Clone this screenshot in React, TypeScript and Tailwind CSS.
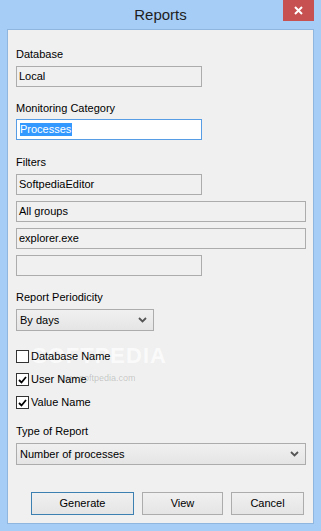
import React from "react";

const font = { fontFamily: '"Liberation Sans", Arial, sans-serif' };

const TextBox = ({ value, wide }: { value?: string; wide?: boolean }) => (
  <div
    className={`h-[21px] border border-[#acacac] bg-[#f0f0f0] flex items-center pl-[2px] text-[11px] text-black ${
      wide ? "w-[290px]" : "w-[186px]"
    }`}
  >
    {value}
  </div>
);

const Chevron = () => (
  <svg width="9" height="6" viewBox="0 0 9 6" className="shrink-0">
    <path d="M1 1 L4.5 4.5 L8 1" fill="none" stroke="#555" strokeWidth="1.8" />
  </svg>
);

const Select = ({ value, wide }: { value: string; wide?: boolean }) => (
  <div
    className={`h-[22px] border border-[#acacac] bg-gradient-to-b from-[#f0f0f0] to-[#e5e5e5] flex items-center justify-between pl-[3px] pr-[6px] text-[11px] text-black ${
      wide ? "w-[290px]" : "w-[138px]"
    }`}
  >
    <span>{value}</span>
    <Chevron />
  </div>
);

const Check = ({ label, checked }: { label: string; checked?: boolean }) => (
  <div className="h-[15px] flex items-center gap-[2px] text-[11px] text-black">
    <div className="w-[13px] h-[13px] border border-[#333] bg-white flex items-center justify-center">
      {checked && (
        <svg width="9" height="8" viewBox="0 0 9 8">
          <path d="M1 4 L3.5 6.5 L8 1" fill="none" stroke="#000" strokeWidth="1.8" />
        </svg>
      )}
    </div>
    <span className="relative z-10">{label}</span>
  </div>
);

const Button = ({ label, focused, w }: { label: string; focused?: boolean; w: string }) => (
  <div
    className={`${w} h-[23px] border ${
      focused ? "border-[#3c7fb1]" : "border-[#acacac]"
    } bg-gradient-to-b from-[#f0f0f0] to-[#e5e5e5] flex items-center justify-center text-[11px] text-black`}
  >
    {label}
  </div>
);

export default function App() {
  return (
    <div style={font} className="w-[321px] h-[531px] bg-[#a6cdf5] flex flex-col px-[7px] pb-[7px]">
      {/* title bar */}
      <div className="relative h-[29px] shrink-0 flex items-center justify-center">
        <span className="text-[15px] text-[#1e1e1e] mt-[1px]">Reports</span>
        <div className="absolute top-0 right-0 w-[31px] h-[21px] bg-[#c75050] flex items-center justify-center">
          <svg width="9" height="9" viewBox="0 0 9 9">
            <path d="M1 1 L8 8 M8 1 L1 8" stroke="#fff" strokeWidth="2" />
          </svg>
        </div>
      </div>

      {/* client area */}
      <div className="relative flex-1 border border-[#8fb6df] bg-[#f0f0f0] pl-[8px] pt-[17px] flex flex-col">
        {/* watermark */}
        <div className="absolute left-[24px] top-[309px] text-[22px] font-bold tracking-[1px] text-white/70 pointer-events-none">
          SOFTPEDIA
        </div>
        <div className="absolute left-[50px] top-[342px] text-[9px] text-black/20 pointer-events-none">
          www.softpedia.com
        </div>

        <div className="h-[15px] text-[11px] leading-[15px] text-black">Database</div>
        <div className="mt-[4px]">
          <TextBox value="Local" />
        </div>

        <div className="mt-[14px] h-[15px] text-[11px] leading-[15px] text-black">Monitoring Category</div>
        <div className="mt-[3px] w-[186px] h-[21px] border border-[#569de5] bg-white flex items-center pl-[3px]">
          <span className="bg-[#3399ff] text-white text-[11px] leading-[13px] pr-[1px]">Processes</span>
        </div>

        <div className="mt-[15px] h-[15px] text-[11px] leading-[15px] text-black">Filters</div>
        <div className="mt-[4px] flex flex-col gap-[6px]">
          <TextBox value="SoftpediaEditor" />
          <TextBox value="All groups" wide />
          <TextBox value="explorer.exe" wide />
          <TextBox />
        </div>

        <div className="mt-[14px] h-[15px] text-[11px] leading-[15px] text-black">Report Periodicity</div>
        <div className="mt-[4px]">
          <Select value="By days" />
        </div>

        <div className="mt-[18px] flex flex-col gap-[8px]">
          <Check label="Database Name" />
          <Check label="User Name" checked />
          <Check label="Value Name" checked />
        </div>

        <div className="mt-[14px] h-[15px] text-[11px] leading-[15px] text-black">Type of Report</div>
        <div className="mt-[4px]">
          <Select value="Number of processes" wide />
        </div>

        <div className="mt-[27px] flex gap-[8px] pl-[15px]">
          <Button label="Generate" focused w="w-[103px]" />
          <Button label="View" w="w-[81px]" />
          <Button label="Cancel" w="w-[73px]" />
        </div>
      </div>
    </div>
  );
}
